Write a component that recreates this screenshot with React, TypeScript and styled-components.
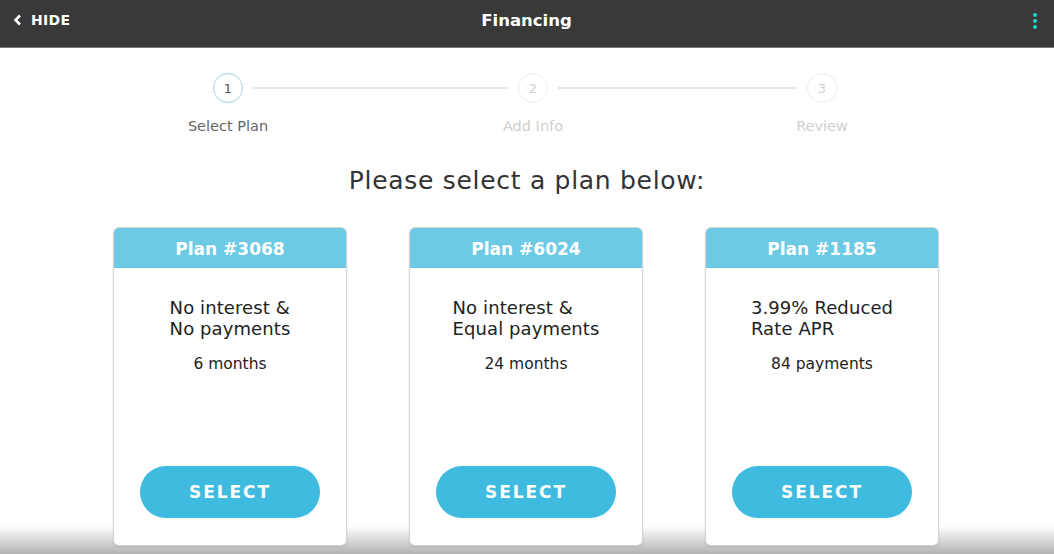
import React from "react";
import styled, { createGlobalStyle } from "styled-components";

const Global = createGlobalStyle`
  html, body { margin: 0; padding: 0; }
  body { font-family: "DejaVu Sans", "Open Sans", sans-serif; overflow: hidden; }
  * { box-sizing: border-box; }
`;

const Page = styled.div`
  width: 1054px;
  height: 554px;
  display: flex;
  flex-direction: column;
  background: linear-gradient(to bottom, #ffffff 0px, #ffffff 526px, #b3b3b3 554px);
`;

const TopBar = styled.header`
  height: 48px;
  flex: none;
  background: #393939;
  border-bottom: 1px solid #7a7a7a;
  display: flex;
  align-items: flex-start;
  justify-content: space-between;
  padding: 11px 14px 0 13px;
  color: #fff;
`;

const HideButton = styled.div`
  display: flex;
  align-items: center;
  gap: 9px;
  height: 20px;
  font-weight: 700;
  font-size: 14px;
  letter-spacing: 0.3px;
  width: 120px;
  margin-top: -1px;
`;

const Title = styled.div`
  font-size: 16.5px;
  font-weight: 700;
  height: 20px;
  line-height: 20px;
`;

const Kebab = styled.div`
  width: 120px;
  display: flex;
  flex-direction: column;
  align-items: flex-end;
  gap: 2px;
  padding-top: 2px;
  padding-right: 3px;
`;

const Dot = styled.span`
  width: 4px;
  height: 4px;
  border-radius: 50%;
  background: #19d6c6;
`;

const Stepper = styled.div`
  display: flex;
  align-items: flex-start;
  margin: 25px 0 0 213px;
`;

const Step = styled.div`
  width: 30px;
  display: flex;
  flex-direction: column;
  align-items: center;
`;

const Circle = styled.div<{ $active?: boolean }>`
  width: 30px;
  height: 30px;
  border-radius: 50%;
  border: 1px solid ${(p) => (p.$active ? "#9ed3dc" : "#ececec")};
  color: ${(p) => (p.$active ? "#555" : "#cfcfcf")};
  display: flex;
  align-items: center;
  justify-content: center;
  font-size: 13px;
`;

const StepLabel = styled.div<{ $active?: boolean }>`
  margin-top: 14px;
  white-space: nowrap;
  font-size: 14.5px;
  line-height: 18px;
  color: ${(p) => (p.$active ? "#666" : "#cfcfcf")};
`;

const Connector = styled.div<{ $w: number }>`
  width: ${(p) => p.$w}px;
  height: 2px;
  background: #e6e6e6;
  margin: 14px 10px 0;
`;

const Heading = styled.h1`
  margin: 31px 0 0;
  text-align: center;
  font-weight: 400;
  font-size: 25px;
  line-height: 30px;
  letter-spacing: 0.7px;
  color: #333;
`;

const Cards = styled.div`
  display: flex;
  justify-content: center;
  gap: 62px;
  margin-top: 31px;
  padding-right: 2px;
`;

const Card = styled.div`
  width: 234px;
  height: 319px;
  background: #fff;
  border: 1px solid #d4d4d4;
  border-radius: 6px;
  box-shadow: 0 1px 2px rgba(0, 0, 0, 0.12);
  overflow: hidden;
  display: flex;
  flex-direction: column;
`;

const CardHead = styled.div`
  height: 40px;
  flex: none;
  background: #6ccae5;
  color: #fff;
  font-weight: 700;
  font-size: 17px;
  display: flex;
  align-items: center;
  justify-content: center;
  padding-top: 2px;
`;

const CardBody = styled.div`
  flex: 1;
  display: flex;
  flex-direction: column;
  align-items: center;
  padding: 29px 0 27px;
`;

const PlanTitle = styled.div`
  font-size: 18px;
  line-height: 21px;
  letter-spacing: 0.1px;
  color: #222;
  text-align: left;
`;

const PlanSub = styled.div`
  margin-top: 16px;
  font-size: 15.5px;
  line-height: 18px;
  color: #222;
`;

const SelectButton = styled.button`
  margin-top: auto;
  width: 180px;
  height: 52px;
  border: none;
  border-radius: 26px;
  background: #3ebbde;
  color: #fff;
  font-family: inherit;
  font-weight: 700;
  font-size: 17px;
  letter-spacing: 1.9px;
  cursor: pointer;
`;

const plans = [
  { id: "3068", lines: ["No interest &", "No payments"], sub: "6 months" },
  { id: "6024", lines: ["No interest &", "Equal payments"], sub: "24 months" },
  { id: "1185", lines: ["3.99% Reduced", "Rate APR"], sub: "84 payments" },
];

export default function App() {
  return (
    <>
      <Global />
      <Page>
        <TopBar>
          <HideButton>
            <svg width="9" height="12" viewBox="0 0 9 12">
              <polyline points="7,1.5 2.5,6 7,10.5" fill="none" stroke="#fff" strokeWidth="2.6" />
            </svg>
            HIDE
          </HideButton>
          <Title>Financing</Title>
          <Kebab>
            <Dot />
            <Dot />
            <Dot />
          </Kebab>
        </TopBar>
        <Stepper>
          <Step>
            <Circle $active>1</Circle>
            <StepLabel $active>Select Plan</StepLabel>
          </Step>
          <Connector $w={255} />
          <Step>
            <Circle>2</Circle>
            <StepLabel>Add Info</StepLabel>
          </Step>
          <Connector $w={239} />
          <Step>
            <Circle>3</Circle>
            <StepLabel>Review</StepLabel>
          </Step>
        </Stepper>
        <Heading>Please select a plan below:</Heading>
        <Cards>
          {plans.map((p) => (
            <Card key={p.id}>
              <CardHead>Plan #{p.id}</CardHead>
              <CardBody>
                <PlanTitle>
                  {p.lines[0]}
                  <br />
                  {p.lines[1]}
                </PlanTitle>
                <PlanSub>{p.sub}</PlanSub>
                <SelectButton>SELECT</SelectButton>
              </CardBody>
            </Card>
          ))}
        </Cards>
      </Page>
    </>
  );
}
